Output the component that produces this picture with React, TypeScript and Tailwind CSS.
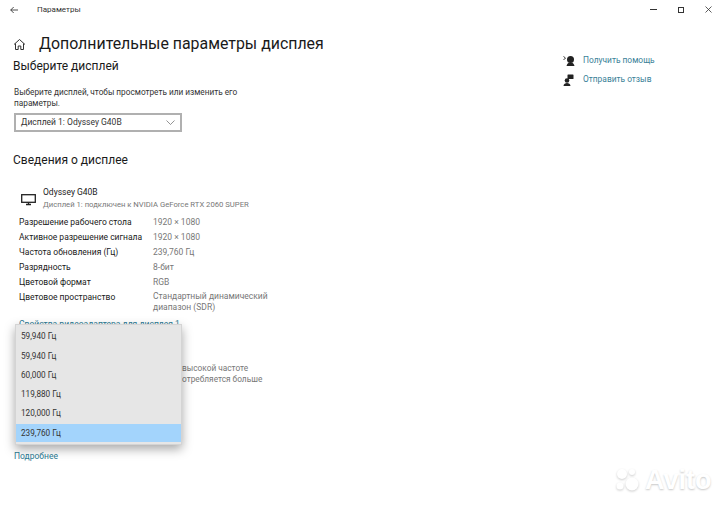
const specs = [
  { label: "Разрешение рабочего стола", value: "1920 × 1080" },
  { label: "Активное разрешение сигнала", value: "1920 × 1080" },
  { label: "Частота обновления (Гц)", value: "239,760 Гц" },
  { label: "Разрядность", value: "8-бит" },
  { label: "Цветовой формат", value: "RGB" },
];

const rates = ["59,940 Гц", "59,940 Гц", "60,000 Гц", "119,880 Гц", "120,000 Гц"];

function HomeIcon() {
  return (
    <svg width="13" height="13" viewBox="0 0 13 13" fill="none" stroke="#333" strokeWidth="1">
      <path d="M1 6.5 6.5 1.5 12 6.5" />
      <path d="M2.5 5.5V11.5H5.2V8H7.8V11.5H10.5V5.5" />
    </svg>
  );
}

function MonitorIcon() {
  return (
    <svg width="15" height="12" viewBox="0 0 15 12" fill="none" stroke="#222">
      <rect x="0.7" y="0.7" width="13.6" height="7.6" strokeWidth="1.3" />
      <path d="M5 10.5H10M7.5 8.5V10.5" strokeWidth="1.3" />
    </svg>
  );
}

function HelpIcon() {
  return (
    <svg width="12" height="11" viewBox="0 0 12 11" fill="#222">
      <circle cx="7.5" cy="4.5" r="3.5" />
      <path d="M3.5 11C4 8.5 5.5 7.5 7.5 7.5S11 8.5 11.5 11Z" />
      <path d="M0.5 1.5 2.5 3 0.5 5" fill="none" stroke="#222" strokeWidth="0.9" />
    </svg>
  );
}

function FeedbackIcon() {
  return (
    <svg width="11" height="12" viewBox="0 0 11 12" fill="#222">
      <rect x="4.5" y="0.5" width="6" height="4.5" rx="0.6" />
      <circle cx="4" cy="6.5" r="2.3" />
      <path d="M0.5 12C0.8 9.8 2.2 9 4 9S7.2 9.8 7.5 12Z" />
    </svg>
  );
}

export default function App() {
  return (
    <div className="relative w-[720px] h-[506px] overflow-hidden bg-white font-['Roboto','Open_Sans',sans-serif] text-[#1a1a1a]">
      {/* title bar */}
      <div className="flex items-center h-[19px] pl-[10px] pr-[8px] text-[8px] text-[#333]">
        <svg width="8" height="8" viewBox="0 0 8 8" fill="none" stroke="#222" strokeWidth="0.8">
          <path d="M8 4H0.7M3.7 1 0.7 4 3.7 7" />
        </svg>
        <span className="ml-[19px]">Параметры</span>
        <div className="ml-auto flex items-center gap-[21px]">
          <div className="w-[7px] h-px bg-[#333]" />
          <div className="w-[6px] h-[6px] border border-[#333]" />
          <svg width="7" height="7" viewBox="0 0 7 7" stroke="#333" strokeWidth="0.8">
            <path d="M0.5 0.5 6.5 6.5M6.5 0.5 0.5 6.5" />
          </svg>
        </div>
      </div>

      <div className="flex">
        <div className="w-[555px] pl-[13px]">
          <div className="flex items-center h-[24px] mt-[13px]">
            <HomeIcon />
            <h1 className="ml-[13px] text-[15.9px] leading-[24px] font-normal">Дополнительные параметры дисплея</h1>
          </div>
          <h2 className="mt-[1px] text-[12px] leading-[18px]">Выберите дисплей</h2>
          <p className="mt-[12px] ml-px w-[232px] text-[8.25px] leading-[11px] text-[#333]">
            Выберите дисплей, чтобы просмотреть или изменить его параметры.
          </p>
          <div className="mt-[4px] ml-px flex items-center justify-between w-[168px] h-[19px] border-2 border-[#b0b0b0] pl-[5px] pr-[5px] text-[8.5px] text-[#333]">
            <span>Дисплей 1: Odyssey G40B</span>
            <svg width="9" height="5" viewBox="0 0 9 5" fill="none" stroke="#666" strokeWidth="0.7">
              <path d="M0.5 0.5 4.5 4.5 8.5 0.5" />
            </svg>
          </div>
          <h2 className="mt-[19px] text-[12px] leading-[18px]">Сведения о дисплее</h2>

          <div className="flex mt-[18px] ml-[8px]">
            <div className="mt-[7px]">
              <MonitorIcon />
            </div>
            <div className="ml-[7px] text-[8.5px] leading-[11px]">
              <div>Odyssey G40B</div>
              <div className="mt-[1px] text-[7.7px] text-[#777]">Дисплей 1: подключен к NVIDIA GeForce RTX 2060 SUPER</div>
            </div>
          </div>

          <div className="mt-[5px] ml-[6px] text-[8.5px] leading-[15px]">
            {specs.map((s) => (
              <div key={s.label} className="flex">
                <span className="w-[134px]">{s.label}</span>
                <span className="text-[#777]">{s.value}</span>
              </div>
            ))}
            <div className="flex">
              <span className="w-[134px]">Цветовое пространство</span>
              <span className="w-[125px] mt-px leading-[11px] text-[#777]">Стандартный динамический диапазон (SDR)</span>
            </div>
          </div>

          {/* only the top of the link shows above the open list */}
          <div className="mt-[5px] ml-[6px] h-[6px] overflow-hidden text-[8.5px] leading-[12px] text-[#2b7a94]">Свойства видеоадаптера для дисплея 1</div>

          <p className="mt-[39px] ml-[169px] whitespace-nowrap text-[8.3px] leading-[11px] text-[#777]">
            высокой частоте
            <br />
            отребляется больше
          </p>
          <div className="mt-[65px] ml-px text-[8.5px] leading-[12px] text-[#2b7a94]">Подробнее</div>
        </div>

        <div className="pt-[32px] pl-[8px] text-[8.4px] text-[#3a7f98]">
          <div className="flex items-center h-[19px] gap-[8px]">
            <HelpIcon />
            <span>Получить помощь</span>
          </div>
          <div className="flex items-center h-[19px] gap-[9px]">
            <FeedbackIcon />
            <span>Отправить отзыв</span>
          </div>
        </div>
      </div>

      {/* opened refresh rate list */}
      <div className="absolute left-[15px] top-[324px] w-[167px] h-[121px] pt-[2px] bg-[#e6e6e6] border border-[#d4d4d4] shadow-[0_4px_10px_rgba(0,0,0,0.35)] text-[8.2px] text-[#333]">
        {rates.map((r, i) => (
          <div key={i} className="flex items-center h-[19.2px] pl-[5px]">
            {r}
          </div>
        ))}
        <div className="flex items-center h-[18px] mt-px pl-[5px] bg-[#a3d4fc]">239,760 Гц</div>
      </div>

      {/* watermark */}
      <div className="absolute left-[612px] top-[466px] flex items-center">
        <svg width="32" height="28" viewBox="0 0 30 28" className="drop-shadow-[0_1px_1px_rgba(0,0,0,0.2)]" fill="#fff">
          <circle cx="9" cy="8" r="5" />
          <circle cx="19" cy="6" r="3" />
          <circle cx="7" cy="20" r="3.5" />
          <circle cx="19" cy="18" r="6.5" />
        </svg>
        <span className="ml-[1px] text-[27px] leading-[28px] font-bold text-white [text-shadow:0_1px_2px_rgba(0,0,0,0.22)] font-['Liberation_Sans',sans-serif]">Avito</span>
      </div>
    </div>
  );
}
